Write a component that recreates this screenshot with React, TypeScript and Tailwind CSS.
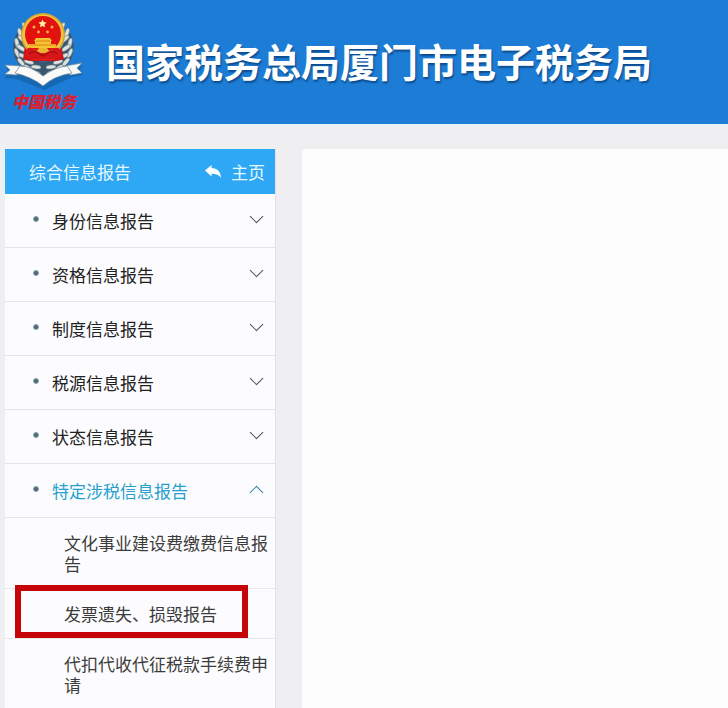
import { ChevronDown, ChevronUp } from "lucide-react";
import clsx from "clsx";

interface MenuItem {
  label: string;
  children?: { label: string; highlighted?: boolean }[];
}

const MENU: MenuItem[] = [
  { label: "身份信息报告" },
  { label: "资格信息报告" },
  { label: "制度信息报告" },
  { label: "税源信息报告" },
  { label: "状态信息报告" },
  {
    label: "特定涉税信息报告",
    children: [
      { label: "文化事业建设费缴费信息报告" },
      { label: "发票遗失、损毁报告", highlighted: true },
      { label: "代扣代收代征税款手续费申请" },
    ],
  },
];

// Leaves of the right-hand wreath; the left one is mirrored
const LEAVES = [
  { x: 62, y: 27, r: -62 },
  { x: 67, y: 33, r: -75 },
  { x: 65, y: 39, r: -40 },
  { x: 70, y: 43, r: -78 },
  { x: 66, y: 48, r: -35 },
  { x: 70, y: 53, r: -65 },
  { x: 64, y: 56, r: -25 },
  { x: 66, y: 62, r: -50 },
  { x: 58, y: 62, r: -15 },
  { x: 59, y: 68, r: -35 },
  { x: 51, y: 67, r: -5 },
  { x: 51, y: 73, r: -20 },
];

function Wreath() {
  return (
    <g>
      <path d="M66 27C78 42 76 60 61 71C54 76 48 76 43 75V62C58 62 65 48 66 27Z" fill="#38576f" />
      {LEAVES.map((leaf) => (
        <ellipse
          key={`${leaf.x}-${leaf.y}`}
          cx={leaf.x}
          cy={leaf.y}
          rx="5"
          ry="2"
          fill="#dde3e2"
          stroke="#6b7b80"
          strokeWidth="0.6"
          transform={`rotate(${leaf.r} ${leaf.x} ${leaf.y})`}
        />
      ))}
    </g>
  );
}

function Emblem() {
  return (
    <svg viewBox="0 0 88 90" className="h-[90px] w-[88px]" aria-hidden="true">
      <g transform="translate(1.5 2)" opacity="0.3">
        <path d="M5 66l15 1 23 13 22-13 17-3-5 5 5 4-11 2-28 13-28-11-12-1 4-5Z" fill="#0b3865" />
      </g>
      <Wreath />
      <g transform="translate(87 0) scale(-1 1)">
        <Wreath />
      </g>
      <path d="M25 46L23 59Q29 62 43 61Q57 62 64 59L61 46Z" fill="#c9151a" />
      <path d="M27 55l7-3 9 5 9-5 8 3-6 5H32Z" fill="#e8261d" />
      <circle cx="43" cy="35" r="22" fill="#dca52c" />
      <circle cx="43" cy="35" r="20.5" fill="#f0c443" />
      <circle cx="43" cy="34" r="18" fill="#e2120f" />
      <path d="M42.5 19.500l1.200 2.600 2.800.3-2 2 .5 2.800-2.500-1.300-2.500 1.300.5-2.800-2-2 2.800-.3Z" fill="#fff0a0" />
      <g fill="#f9b24a">
        <circle cx="34" cy="27" r="1.5" />
        <circle cx="52" cy="27" r="1.5" />
        <circle cx="38.5" cy="32" r="1.4" />
        <circle cx="47.5" cy="32" r="1.4" />
      </g>
      <path d="M36 38h14l2 3H34Zm-1 3h16v3h5v4H29v-4h6Z" fill="#f4c52f" />
      <path d="M36 41h14M30 45h26" stroke="#d96a18" strokeWidth="0.8" />
      <path d="M26 52Q26 47 32 48Q38 53 43 53Q48 53 54 48Q60 47 61 52L62 58Q52 60 43 59Q34 60 24 58Z" fill="#d5171a" />
      <path d="M29 54q5-4 9-1l5 3 5-3q4-3 9 1" stroke="#a80b12" strokeWidth="1.2" fill="none" />
      <path d="M39 48h8l2 3q-6 3-12 0Z" fill="#ecb32c" />
      <path d="M5 65l17 1-1 7-5 2-11-1 5-4ZM82 63l-17 3 1 7 5 2 11-2-5-5Z" fill="#f5f7f5" stroke="#718698" strokeWidth="0.7" />
      <path
        d="M15 73L20 66Q31 66 43 76Q55 67 67 66L72 73Q54 76 43 86Q32 77 15 73Z"
        fill="#fafbf8"
        stroke="#607d96"
        strokeWidth="0.7"
      />
    </svg>
  );
}

function ReplyIcon() {
  return (
    <svg viewBox="0 0 16 14" className="h-[14px] w-[16px]" fill="#ffffff" aria-hidden="true">
      <path d="M0 5.600L6.600 0V3.100C12 3.300 15.600 6.300 16 13C14 9.900 11.200 8.700 6.600 8.800V11.600Z" />
    </svg>
  );
}

function SiteHeader() {
  return (
    <header className="flex h-[124px] shrink-0 bg-[#1d7dd6]">
      <div className="flex w-[88px] shrink-0 flex-col items-center">
        <Emblem />
        <span className="font-['Noto_Sans_CJK_SC',sans-serif] text-[16px] leading-[22px] font-black italic text-[#d91f30]">
          中国税务
        </span>
      </div>
      <h1 className="pt-8 pl-[18px] text-[39px] leading-[56px] font-bold whitespace-nowrap text-white [text-shadow:1px_2px_2px_#0b4a8c]">
        国家税务总局厦门市电子税务局
      </h1>
    </header>
  );
}

function SidebarGroup({ item }: { item: MenuItem }) {
  const open = Boolean(item.children);
  const Chevron = open ? ChevronUp : ChevronDown;

  return (
    <li>
      <button
        type="button"
        aria-expanded={open}
        className={clsx(
          "flex h-[54px] w-full items-center border-b border-[#e3e4e8] pr-[6px] pl-7 text-left",
          open ? "text-[#269fce]" : "text-[#222222]",
        )}
      >
        <span className="mb-1 size-[6px] rounded-full border border-[#8da6b0] bg-[#4d6875]" />
        <span className="ml-[13px] flex-1">{item.label}</span>
        <Chevron
          size={25}
          strokeWidth={1}
          className={clsx("mb-[2px]", open ? "text-[#3585a8]" : "text-[#555555]")}
        />
      </button>

      {item.children && (
        <ul>
          {item.children.map((child) => (
            <li key={child.label} className="relative border-b border-[#e8e9ec]">
              <a href="#" className="block py-[14px] pr-[2px] pl-[59px] leading-[21px] text-[#3c3c3c]">
                {child.label}
              </a>
              {child.highlighted && (
                <span className="pointer-events-none absolute -top-1 left-[10px] h-[53px] w-[233px] border-6 border-[#c60508]" />
              )}
            </li>
          ))}
        </ul>
      )}
    </li>
  );
}

function Sidebar() {
  return (
    <nav className="w-[271px] shrink-0 border-r border-[#e2e2e6] bg-[#fcfcfe] text-[17px]">
      <div className="flex h-[45px] items-center justify-between bg-[#2ea7f5] pr-[10px] pl-6 text-[#e4f8ff]">
        <h2>综合信息报告</h2>
        <a href="#" className="flex items-center gap-[10px]">
          <ReplyIcon />
          主页
        </a>
      </div>
      <ul>
        {MENU.map((item) => (
          <SidebarGroup key={item.label} item={item} />
        ))}
      </ul>
    </nav>
  );
}

export default function App() {
  return (
    <div className="flex h-screen flex-col overflow-hidden bg-[#efeff1] font-['Noto_Sans_CJK_SC',sans-serif]">
      <SiteHeader />
      <div className="flex min-h-0 flex-1 gap-[26px] border-t border-[#e6f5fb] pt-6 pl-[5px]">
        <Sidebar />
        <main className="flex-1 rounded-tl-sm bg-[#fdfdfe]" />
      </div>
    </div>
  );
}
